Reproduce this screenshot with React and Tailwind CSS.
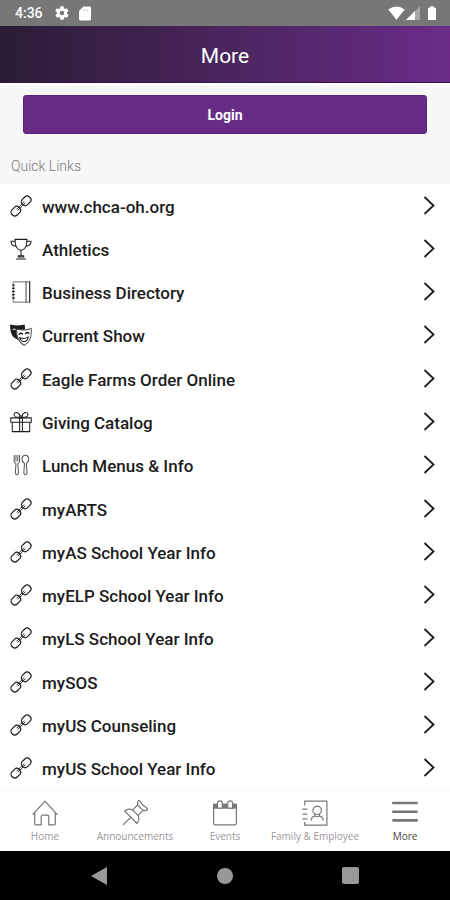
import React from 'react';

const Icon = ({ children, size = 'w-[22px] h-[22px]', width = 1.1 }) => (
  <svg
    viewBox="0 0 24 24"
    className={`${size} shrink-0`}
    fill="none"
    stroke="currentColor"
    strokeWidth={width}
    strokeLinecap="round"
    strokeLinejoin="round"
    aria-hidden="true"
  >
    {children}
  </svg>
);

const LinkIcon = () => (
  <Icon width={1.3}>
    <g transform="rotate(-45 12 12)">
      <rect x="-1.500" y="8" width="11" height="8" rx="3.600" />
      <rect x="14.500" y="8" width="11" height="8" rx="3.600" />
      <path d="M6.500 11.100h11M6.500 12.900h11" strokeWidth="1" />
    </g>
  </Icon>
);

const TrophyIcon = () => (
  <Icon>
    <path d="M5.500 1.500h13c0 3.500-.3 6.500-1.800 8.800-1.300 2-3 3-4.700 3s-3.400-1-4.700-3C5.800 8 5.500 5 5.500 1.500z" />
    <path d="M5.600 3.500H1c.2 3.400 2.200 5.200 5.600 5.400M18.400 3.500H23c-.2 3.400-2.200 5.200-5.600 5.400" />
    <path d="M12 13.300v6M9 19.300h6v1.500H9zM7 22.800h10" />
  </Icon>
);

const NotebookIcon = () => (
  <Icon width={1.2}>
    <path d="M21.500 1H3.500v22h18" stroke="#8a8a8a" />
    <path d="M17.500 1v22" stroke="#555" />
    <path d="M21.500 1v22" />
    <path d="M3 4.500h1.500M3 8h1.500M3 11.500h1.500M3 15h1.500M3 18.500h1.500" strokeWidth="1.600" />
  </Icon>
);

const MasksIcon = () => (
  <Icon>
    <path d="M.8 1.200c4.500 1.300 9.800 1.300 14.700 0l.3 4.300c-3.300.8-6 .7-8.500.2-.5 4 .2 8 2.400 11.500C4 15.500.3 10 .8 1.200z" fill="currentColor" />
    <path d="M3.300 6c.8-.9 1.700-.9 2.500 0" stroke="#fff" />
    <path d="M7.500 5.800c5 1.300 10.800 1 15.700-.8.600 7.500-1.200 15-7.700 18.200C9.500 20.300 6.700 13 7.500 5.800z" fill="#fff" stroke="#555" />
    <path d="M10 11c1-1.300 2.600-1.300 3.600-.2M17 10.400c.9-1.300 2.500-1.500 3.600-.4" strokeWidth="1.600" />
    <path d="M10.500 14.800c3.300 1.500 6.600 1.200 9.500-.8-.6 3.200-2.300 5-4.500 5.200-2.200 0-4-1.500-5-4.400z" />
  </Icon>
);

const GiftIcon = () => (
  <Icon>
    <path d="M.8 7.500h22.400v4.700H.8zM2.500 12.200h19v10.300h-19zM10.500 7.500v15M13.500 7.500v15" />
    <path d="M10.500 7C8 7 4.500 6.500 4.500 4c0-3.500 5-3.500 6.500 1.500M13.500 7c2.500 0 6-.5 6-3 0-3.500-5-3.500-6.500 1.500" />
    <path d="M10.500 5.500h3v2h-3z" />
  </Icon>
);

const UtensilsIcon = () => (
  <Icon>
    <g stroke="#555">
      <path d="M4.500 1.500v6c0 1.700.8 2.500 2 3l-.7 10c0 2.700 3.400 2.700 3.400 0l-.7-10c1.200-.5 2-1.300 2-3v-6M6.500 1.500v6M8.500 1.500v6" />
      <path d="M16.800 1.300c-2.300 0-3.600 2-3.600 4.500 0 2.200 1.200 3.800 2.600 4.400l-.7 10.300c0 2.700 3.400 2.700 3.400 0l-.7-10.300c1.400-.6 2.600-2.200 2.600-4.400 0-2.500-1.300-4.500-3.600-4.500z" />
    </g>
  </Icon>
);

const tabSize = 'w-[26px] h-[26px]';

const HomeIcon = () => (
  <Icon size={tabSize}>
    <path d="M.8 13.300 12 1l11.200 12.300M2.500 11.500v10.700q0 .8.800.8h5.200v-7.500q0-1.500 1.500-1.500h4q1.500 0 1.500 1.500V23h5.200q.8 0 .8-.8V11.500" />
  </Icon>
);

const PinIcon = () => (
  <Icon size={tabSize}>
    <g transform="rotate(45 12 12)">
      <path d="M6 .8q6 1.500 12 0-.3 3.200-2.500 4.200v6.500q4.200 1.500 4.700 6H3.800q.5-4.500 4.700-6V5Q6.300 4 6 .8z" />
      <path d="M8.500 5h7M8.500 11.500h7M12 17.500v10" />
    </g>
  </Icon>
);

const CalendarIcon = () => (
  <Icon size={tabSize}>
    <path d="M1.500 4h21v17.500q0 1.500-1.500 1.500H3q-1.500 0-1.500-1.500z" />
    <path d="M1.500 3.500h21v4.500h-21z" fill="currentColor" stroke="none" />
    <path d="M5 7.500V3a2 2 0 0 1 4.500 0v4.500zM14.500 7.500V3a2 2 0 0 1 4.500 0v4.500z" fill="#fff" />
  </Icon>
);

const ContactIcon = () => (
  <Icon size={tabSize}>
    <path d="M2.500 4.500V1h20.500v22.200H2.500v-2.500M.8 8.500h3.700M.8 13h3.700M.8 17.500h3.700" />
    <circle cx="14" cy="9.500" r="3.900" />
    <path d="M12 13l-.3 1.800q-3 .7-3.200 3.700M16 13l.3 1.800q3 .7 3.200 3.700M11.700 14.800q2.300 1.300 4.600 0" />
  </Icon>
);

const MenuIcon = () => (
  <Icon size={tabSize} width={2.4}>
    <path d="M1.200 2.800h21.600M1.200 10.800h21.600M1.200 18.800h21.600" />
  </Icon>
);

const links = [
  { label: 'www.chca-oh.org', icon: LinkIcon },
  { label: 'Athletics', icon: TrophyIcon },
  { label: 'Business Directory', icon: NotebookIcon },
  { label: 'Current Show', icon: MasksIcon },
  { label: 'Eagle Farms Order Online', icon: LinkIcon },
  { label: 'Giving Catalog', icon: GiftIcon },
  { label: 'Lunch Menus & Info', icon: UtensilsIcon },
  { label: 'myARTS', icon: LinkIcon },
  { label: 'myAS School Year Info', icon: LinkIcon },
  { label: 'myELP School Year Info', icon: LinkIcon },
  { label: 'myLS School Year Info', icon: LinkIcon },
  { label: 'mySOS', icon: LinkIcon },
  { label: 'myUS Counseling', icon: LinkIcon },
  { label: 'myUS School Year Info', icon: LinkIcon },
];

const tabs = [
  { label: 'Home', icon: HomeIcon },
  { label: 'Announcements', icon: PinIcon },
  { label: 'Events', icon: CalendarIcon },
  { label: 'Family & Employee', icon: ContactIcon },
  { label: 'More', icon: MenuIcon, active: true },
];

const StatusBar = () => (
  <div className="h-[26px] bg-[#777777] text-white flex items-center justify-between pl-[15px] pr-[14px]">
    <div className="flex items-center">
      <span className="text-sm leading-4 font-medium">4:36</span>
      <svg viewBox="0 0 24 24" className="w-4 h-4 ml-[11px]" fill="currentColor" aria-hidden="true">
        <path d="M19.400 13c.1-.3.1-.6.1-1s0-.7-.1-1l2.100-1.600c.2-.2.3-.4.100-.6l-2-3.500c-.1-.2-.3-.3-.6-.2l-2.500 1c-.5-.4-1.100-.7-1.700-1l-.4-2.600c0-.3-.2-.5-.5-.5h-4c-.3 0-.5.2-.5.500l-.4 2.600c-.6.300-1.200.600-1.700 1l-2.500-1c-.3-.1-.5 0-.6.200l-2 3.500c-.1.200-.1.500.1.600L4.500 11c0 .3-.1.700-.1 1s0 .7.100 1l-2.100 1.700c-.2.100-.2.400-.1.600l2 3.500c.1.200.3.300.6.200l2.500-1c.5.400 1.100.700 1.700 1l.4 2.600c0 .3.200.4.500.4h4c.3 0 .5-.2.500-.4l.4-2.600c.6-.3 1.200-.6 1.700-1l2.500 1c.3.100.5 0 .6-.2l2-3.500c.1-.2.100-.5-.1-.6zM12 15.500a3.500 3.500 0 1 1 0-7 3.500 3.500 0 0 1 0 7z" />
      </svg>
      <svg viewBox="0 0 12 15" className="w-3 h-[15px] ml-[9px]" fill="currentColor" aria-hidden="true">
        <path d="M4.500.5H10.500q1.500 0 1.500 1.500v11q0 1.500-1.500 1.500h-9Q0 14.500 0 13V5z" />
        <path d="M4.200 3v2M6.500 3v2M8.800 3v2" stroke="#ccc" />
      </svg>
    </div>
    <div className="flex items-center">
      <svg viewBox="0 0 17 14" className="w-[17px] h-[14px]" fill="currentColor" aria-hidden="true">
        <path d="M.3 3.500Q8.500-2.500 16.700 3.500L8.500 13.800z" />
      </svg>
      <svg viewBox="0 0 14 14" className="w-[14px] h-[14px] ml-px" fill="currentColor" aria-hidden="true">
        <path d="M0 14 14 0v14z" opacity=".35" />
        <path d="M0 14 9 5v9z" />
      </svg>
      <svg viewBox="0 0 8 14" className="w-2 h-[14px] ml-2" fill="currentColor" aria-hidden="true">
        <path d="M2.500 0h3v1.500H7q1 0 1 1V13q0 1-1 1H1q-1 0-1-1V2.500q0-1 1-1h1.500z" />
      </svg>
    </div>
  </div>
);

const QuickLink = ({ label, icon: LinkGlyph }) => (
  <li className="flex">
    <a href="#" className="flex-1 flex items-center pl-[10px] pr-[14px] text-[#1c1c20]">
      <LinkGlyph />
      <span className="flex-1 pl-[10px] pt-0.5 text-[17px] leading-5 font-medium">{label}</span>
      <svg
        viewBox="0 0 14 20"
        className="w-[14px] h-5"
        fill="none"
        stroke="currentColor"
        strokeWidth="1.800"
        aria-hidden="true"
      >
        <path d="M2.500 1 11.500 9.500l-9 8.500" />
      </svg>
    </a>
  </li>
);

const TabBar = () => (
  <nav className="h-[61px] bg-white border-t border-[#f7f7f7] grid grid-cols-5">
    {tabs.map(({ label, icon: TabGlyph, active }) => (
      <button
        key={label}
        type="button"
        aria-current={active ? 'page' : undefined}
        className="flex flex-col items-center gap-0.5 pt-[9px] whitespace-nowrap text-[#777777]"
      >
        <TabGlyph />
        <span
          className={`font-['Open_Sans',sans-serif] text-[10px] leading-4 ${
            active ? 'text-[#444444]' : 'text-[#999999]'
          }`}
        >
          {label}
        </span>
      </button>
    ))}
  </nav>
);

const SystemNav = () => (
  <div className="h-[49px] bg-black text-[#999999] flex items-center justify-around px-9">
    <button type="button" aria-label="Back">
      <svg viewBox="0 0 18 18" className="w-[18px] h-[18px]" fill="currentColor">
        <path d="M17 0v18L1 9z" />
      </svg>
    </button>
    <button type="button" aria-label="Home screen">
      <svg viewBox="0 0 18 18" className="w-[18px] h-[18px]" fill="currentColor">
        <circle cx="9" cy="9" r="8" />
      </svg>
    </button>
    <button type="button" aria-label="Recent apps">
      <svg viewBox="0 0 18 18" className="w-[18px] h-[18px]" fill="currentColor">
        <rect width="17" height="17" rx="2" />
      </svg>
    </button>
  </div>
);

const App = () => (
  <div className="min-h-screen flex flex-col bg-white font-[Roboto,sans-serif]">
    <StatusBar />
    <header className="h-[57px] bg-linear-to-r from-[#2b1c35] to-[#6b2c8a] border-b border-[#3a1152] flex items-center justify-center">
      <h1 className="text-[21px] leading-6 text-white pt-1">More</h1>
    </header>
    <section className="bg-[#f7f7f7] border-t-2 border-white pt-[10px] pb-2">
      <div className="px-[23px]">
        <button
          type="button"
          className="block w-full h-[39px] rounded-[3px] bg-[#672c86] border border-[#5f217f] text-white text-sm font-bold"
        >
          Login
        </button>
      </div>
      <h2 className="pt-[22px] pl-[11px] text-sm leading-5 font-light text-[#777777]">Quick Links</h2>
    </section>
    <ul className="flex-1 grid auto-rows-fr">
      {links.map((link) => (
        <QuickLink key={link.label} {...link} />
      ))}
    </ul>
    <TabBar />
    <SystemNav />
  </div>
);

export default App;
